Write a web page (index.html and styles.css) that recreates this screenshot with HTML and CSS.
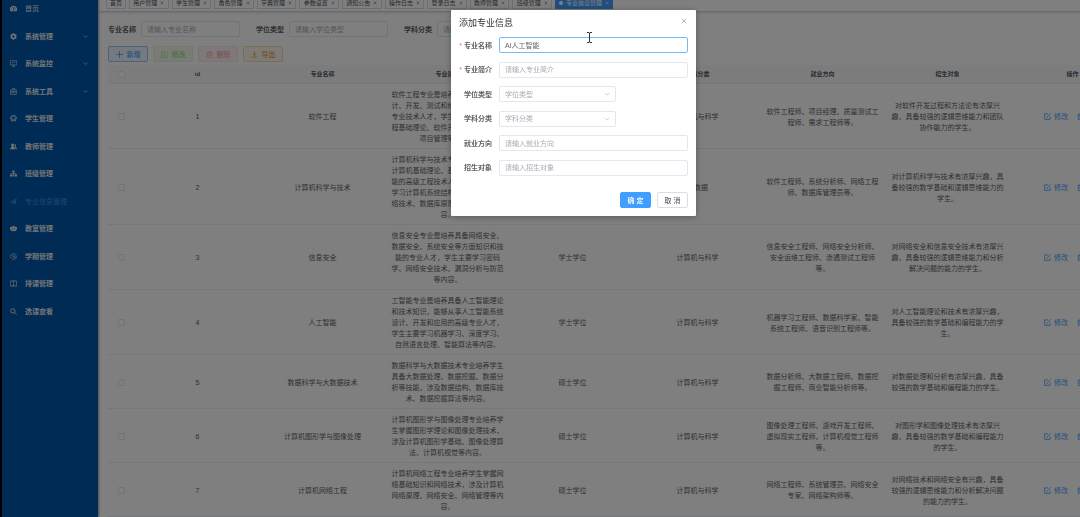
FILE: index.html
```html
<!DOCTYPE html>
<html lang="zh-CN">
<head>
<meta charset="utf-8">
<title>专业信息管理</title>
<link rel="stylesheet" href="styles.css">
</head>
<body>
<svg class="defs" aria-hidden="true">
  <symbol id="i-dash" viewBox="0 0 16 16"><path fill="currentColor" fill-rule="evenodd" d="M8 2a8 8 0 0 0-7 12h14A8 8 0 0 0 8 2zM3 8h2v2H3zM5 4.500h2v2H5zM11 8h2v2h-2zM9.500 4l1.500.5L9 10v2.500H7V10z"/></symbol>
  <symbol id="i-gear" viewBox="0 0 16 16"><circle cx="8" cy="8" r="4.500" fill="none" stroke="currentColor" stroke-width="3.600"/><path stroke="currentColor" stroke-width="2.800" d="M8 .3v3M8 12.700v3M1.300 4.200l2.600 1.500M12.100 10.300l2.600 1.500M1.300 11.800l2.600-1.500M12.100 5.700l2.600-1.500"/></symbol>
  <symbol id="i-monitor" viewBox="0 0 16 16"><path fill="none" stroke="currentColor" stroke-width="1.300" d="M1 1.500h14v9.500H1zM8 11v3M4 14.500h8M4 7l2.500-2 2 2L12 4"/></symbol>
  <symbol id="i-tool" viewBox="0 0 16 16"><path fill="none" stroke="currentColor" stroke-width="1.500" d="M1.500 4.500h13v10h-13zM5 4V1.500h6V4M1.500 9h4M10.500 9h4M6 7.500h4v3H6z"/></symbol>
  <symbol id="i-bus" viewBox="0 0 16 16"><path fill="none" stroke="currentColor" stroke-width="1.600" d="M3 2.500h10v10H3zM1 5v4M15 5v4M3 9.500h10M4.500 12.500V15M11.500 12.500V15M5 1h6"/></symbol>
  <symbol id="i-people" viewBox="0 0 16 16"><path fill="currentColor" d="M6 1c4 0 4 5 2 7.500 0 1.500 4 2 4 6H0c0-4 4-4.500 4-6C2 6 2 1 6 1zM10.500 2c4 0 3.500 4.500 2 6.500 0 1.300 3.500 2 3.500 6h-3c0-3-1.500-4.500-3-5.500C11.500 7 11.500 4 10.500 2z"/></symbol>
  <symbol id="i-tree" viewBox="0 0 16 16"><path fill="currentColor" d="M5.500 1h5v4.500h-5zM0 10.500h4.500V15H0zM5.800 10.500h4.400V15H5.800zM11.500 10.500H16V15h-4.500z"/><path fill="none" stroke="currentColor" stroke-width="1.400" d="M8 5v6M2.300 11V8h11.400v3"/></symbol>
  <symbol id="i-plane" viewBox="0 0 16 16"><path fill="currentColor" d="M15.500 1 0 8.500l4 2L13 4l-7 7.500V15l2.500-2.500L12.500 14z"/></symbol>
  <symbol id="i-room" viewBox="0 0 16 16"><path fill="currentColor" d="M8 2.500 16 5v5l-2 1v2l-6 1.500L2 13v-2l-2-1V5z"/><path stroke="#0057ab" stroke-width=".8" d="M3 7h10M4 10h8"/></symbol>
  <symbol id="i-term" viewBox="0 0 16 16"><path fill="none" stroke="currentColor" stroke-width="1.400" d="M3 13a7 7 0 0 1 0-10l2 2M5 2a7 7 0 0 1 9 9l-2-1M13 13a7 7 0 0 1-8 1M5 6l6 5M8 5v4h4"/></symbol>
  <symbol id="i-book" viewBox="0 0 16 16"><path fill="none" stroke="currentColor" stroke-width="1.400" d="M1 2h14v12H1zM8 2v12M5 2v2M11 2v2M5 12v2M11 12v2"/></symbol>
  <symbol id="i-search" viewBox="0 0 16 16"><path fill="none" stroke="currentColor" stroke-width="2" d="M6.500 1.500a5 5 0 1 0 0 10 5 5 0 0 0 0-10zM10 10l5 5"/></symbol>
  <symbol id="i-down" viewBox="0 0 16 16"><path fill="none" stroke="currentColor" stroke-width="2" d="M2 5l6 6 6-6"/></symbol>
  <symbol id="i-x" viewBox="0 0 16 16"><path fill="none" stroke="currentColor" stroke-width="1.800" d="M2 2l12 12M14 2 2 14"/></symbol>
  <symbol id="i-plus" viewBox="0 0 16 16"><path fill="none" stroke="currentColor" stroke-width="1.800" d="M8 0v16M0 8h16"/></symbol>
  <symbol id="i-edit" viewBox="0 0 16 16"><path fill="none" stroke="currentColor" stroke-width="1.800" d="M9 2H1.500v12.500H14V8M15 1 7 9v2"/></symbol>
  <symbol id="i-trash" viewBox="0 0 16 16"><path fill="none" stroke="currentColor" stroke-width="1.600" d="M1 4h14M3 4v11h10V4M5.500 4V1.500h5V4M6.500 7v5M9.500 7v5"/></symbol>
  <symbol id="i-export" viewBox="0 0 16 16"><path fill="none" stroke="currentColor" stroke-width="1.800" d="M8 1v9M4 6.500l4 4 4-4M1.500 14h13"/></symbol>
</svg>

<div class="app">
  <aside class="sidebar">
    <nav class="menu">
      <a class="menu-item" href="#"><svg class="icon"><use href="#i-dash"/></svg><span>首页</span></a>
      <a class="menu-item" href="#"><svg class="icon"><use href="#i-gear"/></svg><span>系统管理</span><svg class="arrow"><use href="#i-down"/></svg></a>
      <a class="menu-item" href="#"><svg class="icon"><use href="#i-monitor"/></svg><span>系统监控</span><svg class="arrow"><use href="#i-down"/></svg></a>
      <a class="menu-item" href="#"><svg class="icon"><use href="#i-tool"/></svg><span>系统工具</span><svg class="arrow"><use href="#i-down"/></svg></a>
      <a class="menu-item" href="#"><svg class="icon"><use href="#i-bus"/></svg><span>学生管理</span></a>
      <a class="menu-item" href="#"><svg class="icon"><use href="#i-people"/></svg><span>教师管理</span></a>
      <a class="menu-item" href="#"><svg class="icon"><use href="#i-tree"/></svg><span>班级管理</span></a>
      <a class="menu-item current" href="#"><svg class="icon"><use href="#i-plane"/></svg><span>专业信息管理</span></a>
      <a class="menu-item" href="#"><svg class="icon"><use href="#i-room"/></svg><span>教室管理</span></a>
      <a class="menu-item" href="#"><svg class="icon"><use href="#i-term"/></svg><span>学期管理</span></a>
      <a class="menu-item" href="#"><svg class="icon"><use href="#i-book"/></svg><span>排课管理</span></a>
      <a class="menu-item" href="#"><svg class="icon"><use href="#i-search"/></svg><span>选课查看</span></a>
    </nav>
  </aside>

  <main class="main">
    <div class="tabs-bar">
      <nav class="tabs">
        <a class="tab" href="#">首页</a>
        <a class="tab" href="#">用户管理<svg class="tab-x"><use href="#i-x"/></svg></a>
        <a class="tab" href="#">学生管理<svg class="tab-x"><use href="#i-x"/></svg></a>
        <a class="tab" href="#">角色管理<svg class="tab-x"><use href="#i-x"/></svg></a>
        <a class="tab" href="#">字典管理<svg class="tab-x"><use href="#i-x"/></svg></a>
        <a class="tab" href="#">参数设置<svg class="tab-x"><use href="#i-x"/></svg></a>
        <a class="tab" href="#">通知公告<svg class="tab-x"><use href="#i-x"/></svg></a>
        <a class="tab" href="#">操作日志<svg class="tab-x"><use href="#i-x"/></svg></a>
        <a class="tab" href="#">登录日志<svg class="tab-x"><use href="#i-x"/></svg></a>
        <a class="tab" href="#">教师管理<svg class="tab-x"><use href="#i-x"/></svg></a>
        <a class="tab" href="#">班级管理<svg class="tab-x"><use href="#i-x"/></svg></a>
        <a class="tab active" href="#"><i class="dot"></i>专业信息管理<svg class="tab-x"><use href="#i-x"/></svg></a>
      </nav>
    </div>

    <div class="content">
      <form class="filters">
        <div class="filter"><label for="q-name">专业名称</label><input class="field" id="q-name" type="text" placeholder="请输入专业名称"></div>
        <div class="filter"><label for="q-degree">学位类型</label><input class="field" id="q-degree" type="text" placeholder="请输入学位类型"></div>
        <div class="filter"><label for="q-subject">学科分类</label><input class="field" id="q-subject" type="text" placeholder="请输入学科分类"></div>
      </form>

      <div class="toolbar">
        <button class="btn primary" type="button"><svg class="icon"><use href="#i-plus"/></svg>新增</button>
        <button class="btn success" type="button" disabled><svg class="icon"><use href="#i-edit"/></svg>修改</button>
        <button class="btn danger" type="button" disabled><svg class="icon"><use href="#i-trash"/></svg>删除</button>
        <button class="btn warning" type="button"><svg class="icon"><use href="#i-export"/></svg>导出</button>
      </div>

      <div class="table-wrap">
        <table class="table">
          <colgroup><col class="col-check"><col span="8" class="col-data"></colgroup>
          <thead>
            <tr><th><input class="check" type="checkbox" aria-label="全选"></th><th>id</th><th>专业名称</th><th>专业简介</th><th>学位类型</th><th>学科分类</th><th>就业方向</th><th>招生对象</th><th>操作</th></tr>
          </thead>
          <tbody>
            <tr>
              <td><input class="check" type="checkbox" aria-label="选择 1"></td><td>1</td><td>软件工程</td>
              <td>软件工程专业是培养具备软件系统设计、开发、测试和维护等方面能力的专业技术人才，学生主要学习软件工程基础理论、软件开发方法以及软件项目管理等内容。</td>
              <td>学士学位</td><td>计算机与科学</td>
              <td>软件工程师、项目经理、质量测试工程师、需求工程师等。</td>
              <td>对软件开发过程和方法论有浓厚兴趣，具备较强的逻辑思维能力和团队协作能力的学生。</td>
              <td><div class="ops"><a href="#"><svg class="icon"><use href="#i-edit"/></svg>修改</a><a href="#"><svg class="icon"><use href="#i-trash"/></svg>删除</a></div></td>
            </tr>
            <tr>
              <td><input class="check" type="checkbox" aria-label="选择 2"></td><td>2</td><td>计算机科学与技术</td>
              <td>计算机科学与技术专业主要培养具备计算机基础理论、基本知识和基本技能的高级工程技术人才，该专业学生学习计算机系统结构、操作系统、网络技术、数据库原理、软件工程等内容。</td>
              <td>学士学位</td><td>大数据</td>
              <td>软件工程师、系统分析师、网络工程师、数据库管理员等。</td>
              <td>对计算机科学与技术有浓厚兴趣，具备较强的数学基础和逻辑思维能力的学生。</td>
              <td><div class="ops"><a href="#"><svg class="icon"><use href="#i-edit"/></svg>修改</a><a href="#"><svg class="icon"><use href="#i-trash"/></svg>删除</a></div></td>
            </tr>
            <tr>
              <td><input class="check" type="checkbox" aria-label="选择 3"></td><td>3</td><td>信息安全</td>
              <td>信息安全专业是培养具备网络安全、数据安全、系统安全等方面知识和技能的专业人才，学生主要学习密码学、网络安全技术、漏洞分析与防范等内容。</td>
              <td>学士学位</td><td>计算机与科学</td>
              <td>信息安全工程师、网络安全分析师、安全运维工程师、渗透测试工程师等。</td>
              <td>对网络安全和信息安全技术有浓厚兴趣，具备较强的逻辑思维能力和分析解决问题的能力的学生。</td>
              <td><div class="ops"><a href="#"><svg class="icon"><use href="#i-edit"/></svg>修改</a><a href="#"><svg class="icon"><use href="#i-trash"/></svg>删除</a></div></td>
            </tr>
            <tr>
              <td><input class="check" type="checkbox" aria-label="选择 4"></td><td>4</td><td>人工智能</td>
              <td>工智能专业是培养具备人工智能理论和技术知识，能够从事人工智能系统设计、开发和应用的高级专业人才，学生主要学习机器学习、深度学习、自然语言处理、智能算法等内容。</td>
              <td>学士学位</td><td>计算机与科学</td>
              <td>机器学习工程师、数据科学家、智能系统工程师、语音识别工程师等。</td>
              <td>对人工智能理论和技术有浓厚兴趣，具备较强的数学基础和编程能力的学生。</td>
              <td><div class="ops"><a href="#"><svg class="icon"><use href="#i-edit"/></svg>修改</a><a href="#"><svg class="icon"><use href="#i-trash"/></svg>删除</a></div></td>
            </tr>
            <tr>
              <td><input class="check" type="checkbox" aria-label="选择 5"></td><td>5</td><td>数据科学与大数据技术</td>
              <td>数据科学与大数据技术专业培养学生具备大数据处理、数据挖掘、数据分析等技能，涉及数据结构、数据库技术、数据挖掘算法等内容。</td>
              <td>硕士学位</td><td>计算机与科学</td>
              <td>数据分析师、大数据工程师、数据挖掘工程师、商业智能分析师等。</td>
              <td>对数据处理和分析有浓厚兴趣，具备较强的数学基础和编程能力的学生。</td>
              <td><div class="ops"><a href="#"><svg class="icon"><use href="#i-edit"/></svg>修改</a><a href="#"><svg class="icon"><use href="#i-trash"/></svg>删除</a></div></td>
            </tr>
            <tr>
              <td><input class="check" type="checkbox" aria-label="选择 6"></td><td>6</td><td>计算机图形学与图像处理</td>
              <td>计算机图形学与图像处理专业培养学生掌握图形学理论和图像处理技术，涉及计算机图形学基础、图像处理算法、计算机视觉等内容。</td>
              <td>硕士学位</td><td>计算机与科学</td>
              <td>图像处理工程师、游戏开发工程师、虚拟现实工程师、计算机视觉工程师等。</td>
              <td>对图形学和图像处理技术有浓厚兴趣，具备较强的数学基础和编程能力的学生。</td>
              <td><div class="ops"><a href="#"><svg class="icon"><use href="#i-edit"/></svg>修改</a><a href="#"><svg class="icon"><use href="#i-trash"/></svg>删除</a></div></td>
            </tr>
            <tr>
              <td><input class="check" type="checkbox" aria-label="选择 7"></td><td>7</td><td>计算机网络工程</td>
              <td>计算机网络工程专业培养学生掌握网络基础知识和网络技术，涉及计算机网络原理、网络安全、网络管理等内容。</td>
              <td>硕士学位</td><td>计算机与科学</td>
              <td>网络工程师、系统管理员、网络安全专家、网络架构师等。</td>
              <td>对网络技术和网络安全有兴趣，具备较强的逻辑思维能力和分析解决问题的能力的学生。</td>
              <td><div class="ops"><a href="#"><svg class="icon"><use href="#i-edit"/></svg>修改</a><a href="#"><svg class="icon"><use href="#i-trash"/></svg>删除</a></div></td>
            </tr>
          </tbody>
        </table>
      </div>
    </div>
  </main>
</div>

<div class="overlay">
  <section class="dialog" role="dialog" aria-labelledby="dlg-title">
    <header class="dialog-head">
      <h2 id="dlg-title">添加专业信息</h2>
      <button class="close" type="button" aria-label="关闭"><svg><use href="#i-x"/></svg></button>
    </header>
    <form class="form">
      <label class="required" for="f-name">专业名称</label><input class="field focus" id="f-name" type="text" value="AI人工智能">
      <label class="required" for="f-intro">专业简介</label><input class="field" id="f-intro" type="text" placeholder="请输入专业简介">
      <label for="f-degree">学位类型</label>
      <div class="select"><select class="field" id="f-degree"><option>学位类型</option></select><svg><use href="#i-down"/></svg></div>
      <label for="f-subject">学科分类</label>
      <div class="select"><select class="field" id="f-subject"><option>学科分类</option></select><svg><use href="#i-down"/></svg></div>
      <label for="f-job">就业方向</label><input class="field" id="f-job" type="text" placeholder="请输入就业方向">
      <label for="f-target">招生对象</label><input class="field" id="f-target" type="text" placeholder="请输入招生对象">
    </form>
    <footer class="dialog-foot">
      <button class="btn confirm" type="button">确 定</button>
      <button class="btn" type="button">取 消</button>
    </footer>
  </section>
  <svg class="cursor" viewBox="0 0 7 11" aria-hidden="true"><path fill="none" stroke="#333" d="M1 .5h2l.5.5.5-.5h2M3.500 1v9M1 10.500h2l.5-.5.5.5h2"/></svg>
</div>
</body>
</html>
```
FILE: styles.css
```css
* { box-sizing: border-box; }

body {
  margin: 0;
  height: 100vh;
  overflow: hidden;
  background: #fff;
  color: #606266;
  font: 7px/11px "Liberation Sans", "Noto Sans CJK SC", sans-serif;
}

a { color: inherit; text-decoration: none; }
button, input, select { font: inherit; color: inherit; margin: 0; }
svg { flex: none; }
.defs { display: none; }
.icon { width: 7px; height: 7px; }

.app { display: flex; height: 100vh; overflow: hidden; }

/* Sidebar */
.sidebar {
  flex: none;
  width: 98px;
  overflow: hidden;
  background: #0057ab;
  border-left: 2px solid #000;
  box-shadow: 1px 0 2px rgba(0, 21, 41, .4);
}
.menu {
  display: flex;
  flex-direction: column;
  height: 330px;
  margin-top: -5px;
}
.menu-item {
  flex: 1;
  display: flex;
  align-items: center;
  gap: 8px;
  padding: 0 10px 0 8px;
  color: #e4e9ef;
  font-weight: 700;
}
.menu-item:first-child { font-weight: 400; }
.menu-item.current { color: #409eff; font-weight: 400; opacity: .8; }
.arrow { width: 5px; height: 5px; margin-left: auto; }

/* Tabs */
.main { flex: 1; min-width: 0; overflow: hidden; }
.tabs-bar {
  display: flex;
  align-items: flex-end;
  height: 12px;
  padding: 0 8px 2px;
  overflow: hidden;
  border-bottom: 1px solid #d0d2d6;
  box-shadow: 0 1px 2px rgba(0, 0, 0, .12);
}
.tabs {
  display: grid;
  grid-template-columns: 20px repeat(10, 1fr) 58px;
  gap: 3px;
  width: 507px;
}
.tab {
  display: flex;
  align-items: center;
  justify-content: center;
  gap: 3px;
  height: 12px;
  border: 1px solid #d8dce5;
  color: #495060;
  font-size: 6px;
  white-space: nowrap;
}
.tab-x { width: 4px; height: 4px; }
.tab.active { background: #409eff; border-color: #409eff; color: #fff; }
.dot { width: 4px; height: 4px; border-radius: 50%; background: #fff; }

/* Filters and toolbar */
.content { padding: 9px 0 0 10px; }
.filters { display: flex; gap: 16px; }
.filter { display: flex; align-items: center; gap: 5px; font-weight: 700; }
.field {
  width: 100%;
  height: 16px;
  padding: 0 5px;
  border: 1px solid #e4e7ed;
  border-radius: 2px;
  background: #fff;
  outline: none;
  font-weight: 400;
}
.field::placeholder { color: #a8abb2; opacity: 1; }
.filter .field { width: 99px; }

.toolbar { display: flex; gap: 5px; padding: 9px 0 3px; }
.btn {
  display: flex;
  align-items: center;
  justify-content: center;
  gap: 3px;
  height: 16px;
  padding: 0;
  border: 1px solid #dcdfe6;
  border-radius: 2px;
  background: #fff;
  font-weight: 500;
}
.toolbar .btn { width: 40px; gap: 4px; }
.toolbar .primary { color: #409eff; background: #ecf5ff; border-color: #8cc5ff; }
.toolbar .success { color: #a4da89; background: #f0f9eb; border-color: #e1f3d8; }
.toolbar .danger { color: #f9a7a7; background: #fef0f0; border-color: #fde2e2; }
.toolbar .warning { color: #e6a23c; background: #fdf6ec; border-color: #f5dab1; }

/* Table */
.table-wrap { overflow: hidden; }
.table {
  width: 1027px;
  table-layout: fixed;
  border-collapse: separate;
  border-spacing: 0;
  text-align: center;
}
.col-check { width: 27px; }
.col-data { width: 125px; }
.table th {
  height: 19px;
  padding: 1px 0 0;
  background: #f8f8f9;
  border-bottom: 1px solid #ebeef5;
  color: #515a6e;
  font-size: 6px;
  font-weight: 700;
}
.table td {
  padding: 5px 5px 4px;
  border-bottom: 1px solid #ebeef5;
}
.check {
  appearance: none;
  display: block;
  width: 7px;
  height: 7px;
  margin: 0 auto;
  border: 1px solid #e4e7ed;
  border-radius: 1px;
  background: #fff;
}
.table th:first-child, .table td:first-child { padding-left: 0; padding-right: 0; }
.ops { display: flex; justify-content: center; gap: 9px; color: #409eff; }
.ops a { display: flex; align-items: center; gap: 3px; }

/* Dialog */
.overlay { position: fixed; inset: 0; background: rgba(0, 0, 0, .5); }
.dialog {
  position: absolute;
  top: 10px;
  left: 451px;
  width: 245px;
  padding: 7px 8px 8px;
  background: #fff;
  border-radius: 1px;
  box-shadow: 0 1px 6px rgba(0, 0, 0, .3);
}
.dialog-head { display: flex; justify-content: space-between; align-items: flex-start; }
.dialog-head h2 { margin: 0; color: #303133; font-size: 9px; line-height: 12px; font-weight: 400; }
.close { padding: 1px; border: 0; background: none; color: #909399; }
.close svg { display: block; width: 6px; height: 6px; }
.form {
  display: grid;
  grid-template-columns: 33px 1fr;
  column-gap: 7px;
  align-items: center;
  align-content: space-between;
  height: 139px;
  margin-top: 8px;
}
.form label { display: flex; justify-content: flex-end; font-weight: 700; white-space: nowrap; }
.required::before { content: "*"; margin-right: 2px; color: #f56c6c; font-weight: 400; }
.form .focus { border-color: #79b8f8; }
.select { display: grid; width: 117px; align-items: center; }
.select > * { grid-area: 1 / 1; }
.select select { appearance: none; color: #a8abb2; }
.select svg { width: 6px; height: 6px; margin-right: 6px; justify-self: end; color: #c0c4cc; pointer-events: none; }
.dialog-foot { display: flex; justify-content: flex-end; gap: 6px; margin-top: 16px; }
.dialog-foot .btn { width: 31px; }
.dialog-foot .confirm { background: #409eff; border-color: #409eff; color: #fff; }
.cursor { position: absolute; left: 586px; top: 32px; width: 7px; height: 11px; }
```
